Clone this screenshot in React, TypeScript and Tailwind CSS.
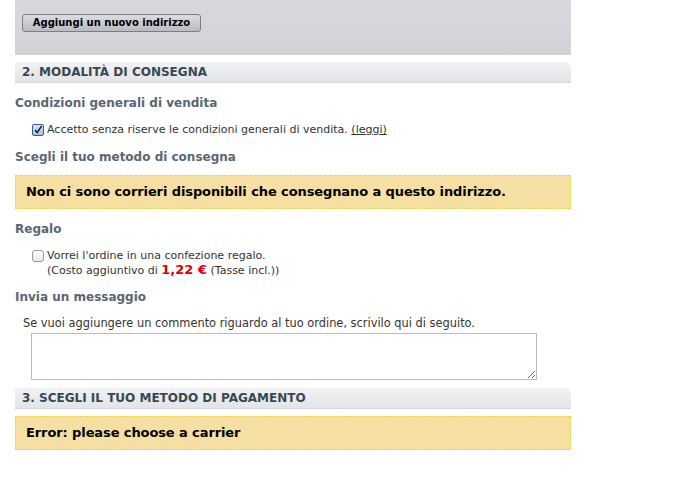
import React from "react";

const font = { fontFamily: '"DejaVu Sans", Verdana, sans-serif' };

function SectionHeader({ children }: { children: React.ReactNode }) {
  return (
    <div className="h-[21px] rounded-tr-[6px] border-b border-[#d6d7da] bg-gradient-to-b from-[#f1f2f4] to-[#e3e4e7] pl-[7px] text-[12px] font-bold leading-[20px] text-[#374853]">
      {children}
    </div>
  );
}

function Warning({ children }: { children: React.ReactNode }) {
  return (
    <div className="h-[34px] border border-dashed border-[#f0d83a] bg-[#f5dfa2] pl-[10px] text-[13px] font-bold leading-[32px] tracking-[-0.1px] text-black">
      {children}
    </div>
  );
}

function Title({ children }: { children: React.ReactNode }) {
  return <div className="text-[12px] font-bold leading-[16px] text-[#5a6673]">{children}</div>;
}

export default function App() {
  return (
    <div className="h-[488px] w-[678px] bg-white" style={font}>
      <div className="ml-[15px] w-[556px]">
        <div className="h-[55px] bg-gradient-to-b from-[#d8d9dc] to-[#d2d3d6] pl-[7px] pt-[14px]">
          <button className="block h-[18px] w-[179px] rounded-[3px] border border-[#7b7e84] bg-gradient-to-b from-[#dcdde0] to-[#b9bbc0] text-[10px] font-bold leading-[16px] text-black">
            Aggiungi un nuovo indirizzo
          </button>
        </div>
        <div className="mt-[7px]">
          <SectionHeader>2. MODALITÀ DI CONSEGNA</SectionHeader>
        </div>
        <div className="mt-[12px]">
          <Title>Condizioni generali di vendita</Title>
        </div>
        <div className="mt-[12px] flex items-center pl-[17px] text-[11px] leading-[14px] text-[#333]">
          <span className="mr-[3px] flex h-[12px] w-[12px] items-center justify-center rounded-[2px] border border-[#3a5b8c] bg-gradient-to-b from-[#dce6f4] to-[#a9c0e0]">
            <svg width="12" height="12" viewBox="0 0 12 12">
              <path d="M2.5 6 L5 9 L10.5 1" fill="none" stroke="#102040" strokeWidth="1.8" />
            </svg>
          </span>
          <span>
            Accetto senza riserve le condizioni generali di vendita.{" "}
            <span className="underline">(leggi)</span>
          </span>
        </div>
        <div className="mt-[12px]">
          <Title>Scegli il tuo metodo di consegna</Title>
        </div>
        <div className="mt-[10px]">
          <Warning>Non ci sono corrieri disponibili che consegnano a questo indirizzo.</Warning>
        </div>
        <div className="mt-[12px]">
          <Title>Regalo</Title>
        </div>
        <div className="mt-[12px] flex pl-[17px] text-[11px] leading-[14px] text-[#333]">
          <span className="mr-[3px] mt-[1px] h-[12px] w-[12px] rounded-[3px] border border-[#9a9a9a] bg-gradient-to-b from-white to-[#e8e8e8]"></span>
          <div>
            <div>Vorrei l'ordine in una confezione regalo.</div>
            <div>
              (Costo aggiuntivo di{" "}
              <span className="text-[13px] font-bold text-[#dd0000]">1,22 €</span> (Tasse incl.))
            </div>
          </div>
        </div>
        <div className="mt-[11px]">
          <Title>Invia un messaggio</Title>
        </div>
        <div className="mt-[11px] pl-[8px] text-[11.4px] leading-[14px] text-[#333]">
          Se vuoi aggiungere un commento riguardo al tuo ordine, scrivilo qui di seguito.
        </div>
        <div className="mt-[3px] pl-[16px]">
          <textarea className="block h-[47px] w-[506px] border border-[#bcbcbc] bg-white outline-none" />
        </div>
        <div className="mt-[8px]">
          <SectionHeader>3. SCEGLI IL TUO METODO DI PAGAMENTO</SectionHeader>
        </div>
        <div className="mt-[7px]">
          <Warning>Error: please choose a carrier</Warning>
        </div>
      </div>
    </div>
  );
}
